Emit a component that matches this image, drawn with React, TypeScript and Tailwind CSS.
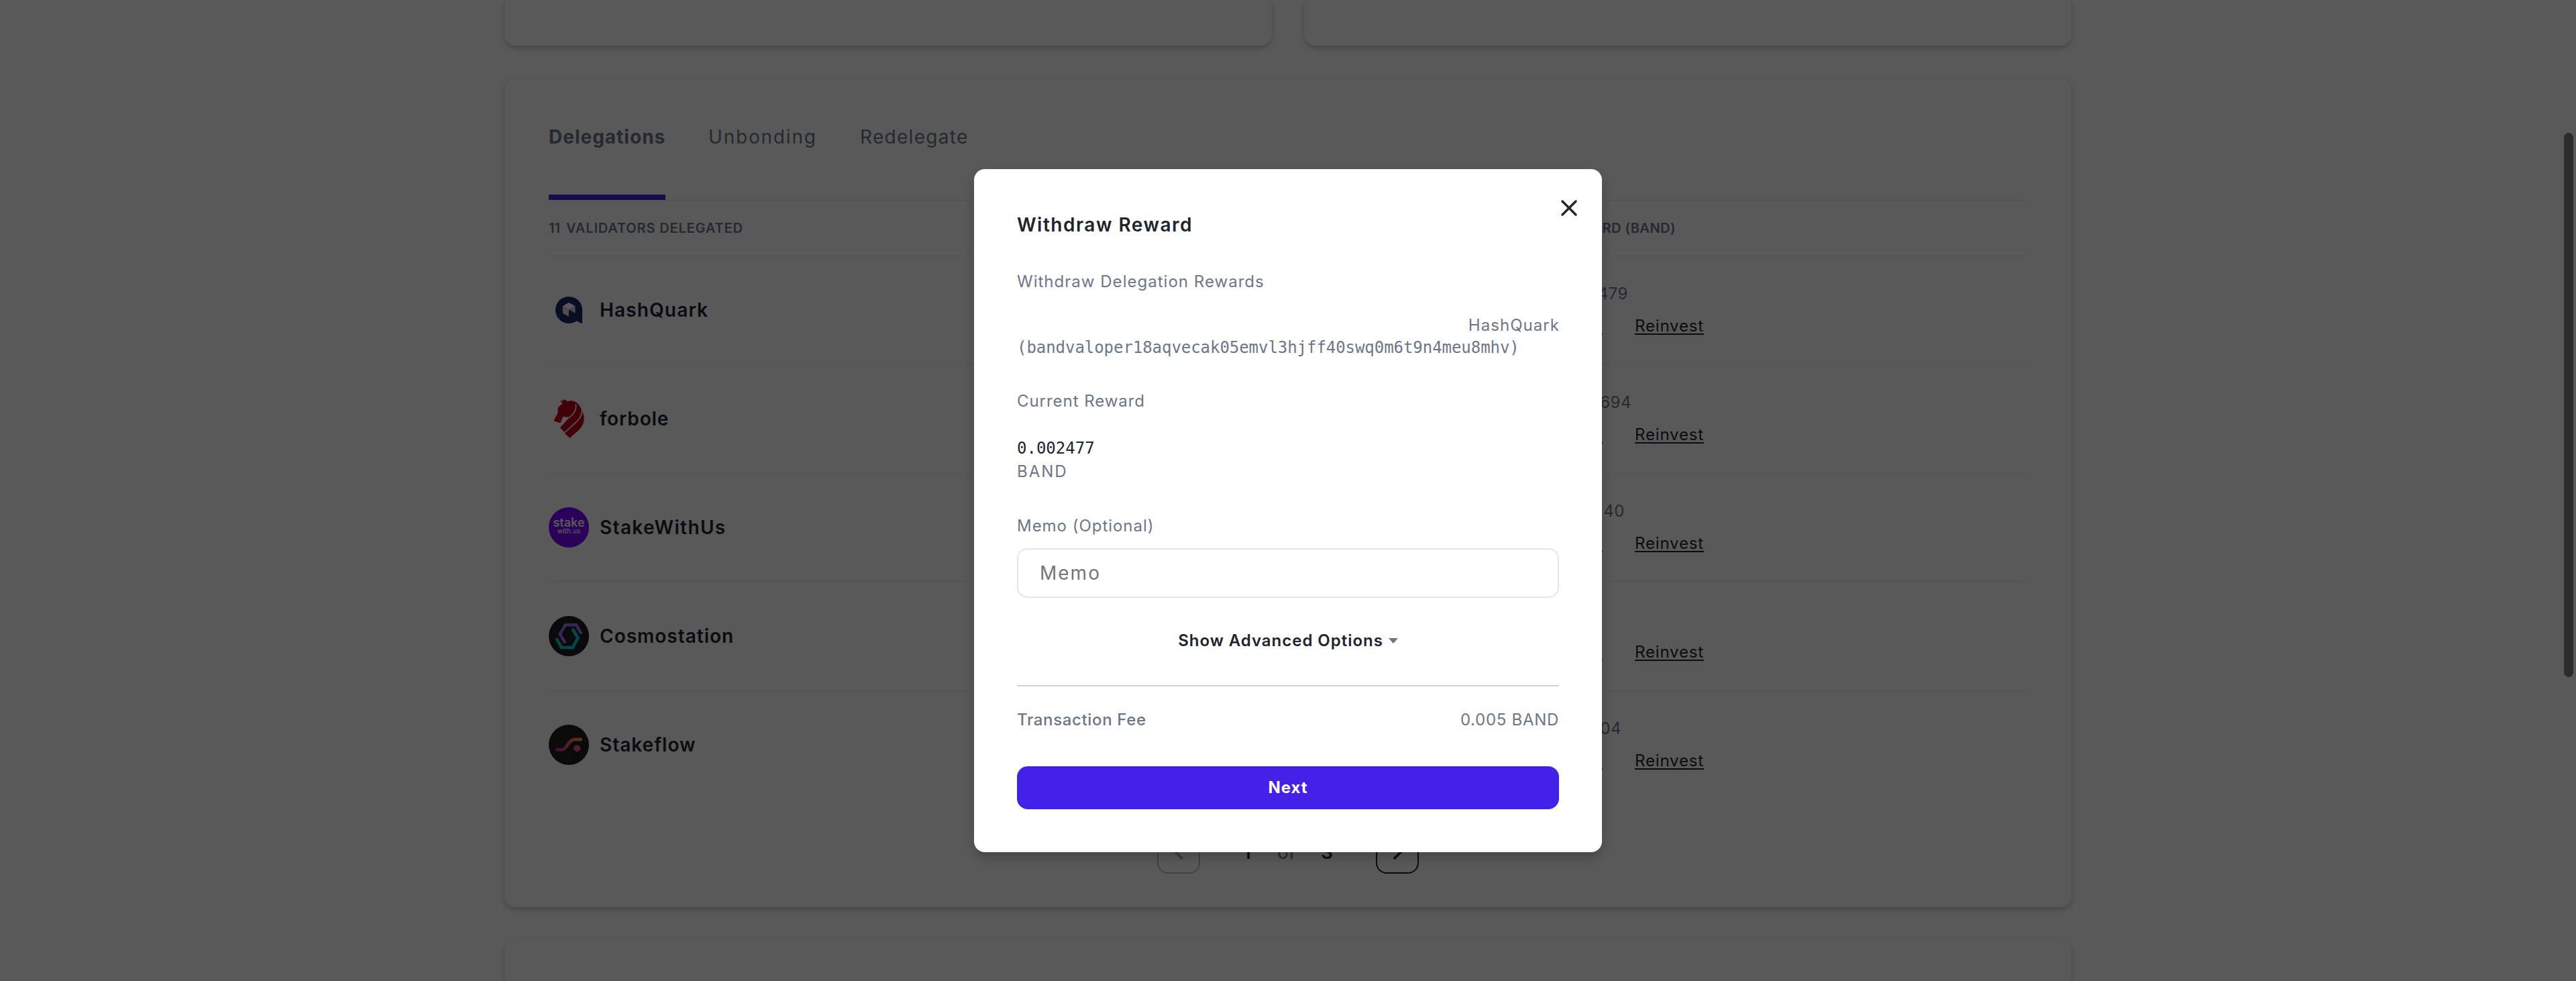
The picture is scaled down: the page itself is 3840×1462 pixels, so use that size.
import React from "react";

const HashQuarkLogo = () => (
  <svg viewBox="0 0 60 60" className="size-[60px]">
    <path d="M30 10a20 20 0 1 0 10.5 37c.6-.4 1.200-.6 1.900-.2l5.600 3c1 .5 2 .1 2-1V30a20 20 0 0 0-20-20z" fill="#1b2a66" />
    <path d="M29.900 19l9.600 5.300-9.600 5-9.200-5z" fill="#ffffff" />
    <path d="M20.700 24.300l9.200 5V40l-9.200-5.300z" fill="#dedede" />
    <path d="M29.900 29.300l9.600-5v10.400z" fill="#cccccc" />
  </svg>
);

const ForboleLogo = () => (
  <svg viewBox="0 0 60 60" className="size-[60px]">
    <path
      d="M17 3l4.500.3.500-2 1.800.7 2.200.3 1.800 2C32 2.500 38 3 42 6.500c4 3.500 6.500 7.500 7 10.500 2.800 5 4 9.500 3.600 14.500-.6 7-4.600 12.500-9.600 17.200L31.300 58.700l-6.600-6-2-3.400-5.700-6L29.500 29.500 28.500 27.500l-7.500-.5-2.500 7.500c-.4 1.400-1 1.800-2.200 1.600L8 33.700C8.400 29 12 26 13.500 21l.2-7.500L20.500 7z"
      fill="#c4001a"
    />
    <path d="M40.300 8.500C42 18 36 24.500 28.500 29.500M49.500 15.500C51 31 36 38 22.500 52" fill="none" stroke="#ffffff" strokeWidth="1.700" />
  </svg>
);

const StakeWithUsLogo = () => (
  <div className="flex size-[60px] flex-col items-center justify-center rounded-full bg-[#7a00ff] pb-[3px] text-white">
    <span className="text-[18px] leading-[14px] font-semibold">stake</span>
    <span className="text-[10px] leading-[11px] font-medium">with.us</span>
  </div>
);

const CosmostationLogo = () => (
  <svg viewBox="0 0 60 60" className="size-[60px]">
    <circle cx="30" cy="30" r="30" fill="#1f1f1f" />
    <g fill="none" strokeWidth="4.500">
      <path d="M24.700 40.300L16.700 26.900 25 13.300H41l7.700 13.400" stroke="#9c6cff" />
      <path d="M11.300 33L19 47h16.700l8-14.300-8.400-13.400" stroke="#05d2d2" />
    </g>
  </svg>
);

const StakeflowLogo = () => (
  <svg viewBox="0 0 60 60" className="size-[60px]">
    <defs>
      <linearGradient id="flow" gradientUnits="userSpaceOnUse" x1="10" y1="37" x2="50" y2="22">
        <stop offset="0" stopColor="#a52bb5" />
        <stop offset="0.450" stopColor="#e8555a" />
        <stop offset="1" stopColor="#f2a93b" />
      </linearGradient>
      <linearGradient id="dot" x1="0" y1="1" x2="1" y2="0">
        <stop offset="0" stopColor="#c03a9a" />
        <stop offset="1" stopColor="#f08a3b" />
      </linearGradient>
    </defs>
    <circle cx="30" cy="30" r="30" fill="#1f1f1f" />
    <path d="M12.300 37.300H19c9 0 9-15 20-15.200h8.500" fill="none" stroke="url(#flow)" strokeWidth="5" strokeLinecap="round" />
    <circle cx="42" cy="35.500" r="5" fill="url(#dot)" />
  </svg>
);

const validators = [
  { name: "HashQuark", Logo: HashQuarkLogo, tracking: "tracking-[1.150px]", reward: "0.002479", inset: "pr-[113px]" },
  { name: "forbole", Logo: ForboleLogo, tracking: "tracking-[0.850px]", reward: "0.002694", inset: "pr-[108px]" },
  { name: "StakeWithUs", Logo: StakeWithUsLogo, tracking: "tracking-[1.350px]", reward: "0.003140", inset: "pr-[118px]" },
  { name: "Cosmostation", Logo: CosmostationLogo, tracking: "tracking-[1px]", reward: "0.0011", inset: "pr-[160px]" },
  { name: "Stakeflow", Logo: StakeflowLogo, tracking: "tracking-[1px]", reward: "0.00204", inset: "pr-[123px]" },
];

const card = "border-2 border-[#f7f7f7] bg-white shadow-[0_4px_8px_rgba(0,0,0,0.200)]";

const linkStyle = "underline decoration-2 underline-offset-[3px]";

const Page = () => (
  <div className="flex h-full flex-col items-center">
    <div className="flex w-[2336px] shrink-0 gap-12">
      <div className={`h-[68px] flex-1 rounded-b-2xl border-t-0 ${card}`} />
      <div className={`h-[68px] flex-1 rounded-b-2xl border-t-0 ${card}`} />
    </div>

    <div className={`mt-12 flex h-[1236px] w-[2336px] shrink-0 flex-col rounded-2xl px-16 ${card}`}>
      <div className="flex h-[182px] shrink-0 gap-16 border-b-2 border-[#f2f2f2] text-[28px] leading-none text-[#6c7689]">
        <div className="flex w-[174px] items-center border-b-8 border-[#4520e6] font-bold tracking-[1px]">Delegations</div>
        <div className="flex w-[162px] items-center pb-2 tracking-[1.800px]">Unbonding</div>
        <div className="flex items-center pb-2 tracking-[1.300px]">Redelegate</div>
      </div>

      <div className="flex h-[82px] shrink-0 items-center justify-between border-b-2 border-[#f2f2f2] text-[20px] font-semibold text-[#6c7689]">
        <div className="flex gap-[9px]">
          <span>11</span>
          <span className="tracking-[0.850px]">VALIDATORS DELEGATED</span>
        </div>
        <span className="pr-[524px] tracking-[0.500px]">REWARD (BAND)</span>
      </div>

      {validators.map(({ name, Logo, tracking, reward, inset }) => (
        <div key={name} className="flex h-[162px] shrink-0 items-center justify-between border-b-2 border-[#f2f2f2] nth-[7]:border-transparent">
          <div className="flex items-center gap-4">
            <Logo />
            <span className={`text-[28px] font-semibold text-[#20242c] ${tracking}`}>{name}</span>
          </div>
          <div className="flex flex-col items-end pr-[482px] text-[24px] leading-[48px]">
            <span className={`tracking-[0.500px] text-[#6c7689] ${inset}`}>{reward}</span>
            <div className="flex gap-12 text-[#20242c]">
              <span className={linkStyle}>Claim</span>
              <span className={`tracking-[0.840px] ${linkStyle}`}>Reinvest</span>
            </div>
          </div>
        </div>
      ))}

      <div className="mt-[46px] flex items-center justify-center text-[28px] text-[#20242c]">
        <div className="flex size-16 items-center justify-center rounded-2xl border-2 border-[#b9bbc8]">
          <svg viewBox="0 0 24 24" className="size-6">
            <path d="M17.500 2L7.500 12l10 10" fill="none" stroke="#a8a8a8" strokeWidth="3.600" />
          </svg>
        </div>
        <div className="flex w-[262px] pl-[60px] text-center">
          <span className="w-5 font-semibold">1</span>
          <span className="ml-[35px] w-6 text-[#6c7689]">of</span>
          <span className="ml-10 w-5 font-semibold">3</span>
        </div>
        <div className="flex size-16 items-center justify-center rounded-2xl border-2 border-[#20242c]">
          <svg viewBox="0 0 24 24" className="size-6">
            <path d="M7 2l10 10L7 22" fill="none" stroke="#20242c" strokeWidth="3.600" />
          </svg>
        </div>
      </div>
    </div>

    <div className={`mt-12 h-[200px] w-[2336px] shrink-0 rounded-2xl ${card}`} />
  </div>
);

const Modal = () => (
  <div className="relative flex h-[1018px] w-[936px] flex-col rounded-2xl bg-white px-16 pt-16 text-[24px] leading-8 text-[#6c7689] shadow-[0_8px_16px_rgba(0,0,0,0.200)]">
    <svg viewBox="0 0 24 24" className="absolute top-[46px] right-[37px] size-6">
      <path d="M2 2l20 20M22 2L2 22" fill="none" stroke="#20242c" strokeWidth="3.400" strokeLinecap="round" />
    </svg>

    <h2 className="text-[28px] leading-[38px] font-semibold tracking-[1.500px] text-[#20242c]">Withdraw Reward</h2>

    <div className="mt-[50px] tracking-[1.020px]">Withdraw Delegation Rewards</div>
    <div className="mt-[33px] -mr-px text-right tracking-[1.050px]">HashQuark</div>
    <div className="font-['DejaVu_Sans_Mono',monospace] leading-[34px] tracking-[-0.050px] whitespace-nowrap">
      (bandvaloper18aqvecak05emvl3hjff40swq0m6t9n4meu8mhv)
    </div>

    <div className="mt-[47px] tracking-[0.950px]">Current Reward</div>
    <div className="mt-[39px] font-['DejaVu_Sans_Mono',monospace] leading-[30px] text-[#20242c]">0.002477</div>
    <div className="mt-1 leading-[31px] tracking-[2px]">BAND</div>

    <div className="mt-[50px] tracking-[0.970px]">Memo (Optional)</div>
    <input
      className="mt-[17px] h-[74px] w-full shrink-0 rounded-2xl border-2 border-[#e4e5ea] bg-white px-8 text-[28px] tracking-[2px] outline-none placeholder:text-[#757575]"
      placeholder="Memo"
    />

    <div className="mt-12 flex items-center justify-center gap-2">
      <span className="font-semibold tracking-[0.970px] text-[#20242c]">Show Advanced Options</span>
      <svg viewBox="0 0 14 8" className="h-2 w-3.5">
        <path d="M0 0h14L7 8z" fill="#6c7689" />
      </svg>
    </div>

    <div className="mt-[50px] h-0.5 shrink-0 bg-[#ced2d9]" />

    <div className="mt-[34px] flex justify-between">
      <span className="font-medium tracking-[0.650px]">Transaction Fee</span>
      <span className="tracking-[0.700px]">0.005 BAND</span>
    </div>

    <button className="mt-[53px] h-16 w-full shrink-0 rounded-2xl bg-[#4520e6] font-bold tracking-[0.900px] text-white">Next</button>
  </div>
);

export default function App() {
  return (
    <div className="relative h-[1462px] w-full overflow-hidden bg-white font-['Inter',sans-serif]">
      <Page />
      <div className="absolute inset-0 flex items-start justify-center bg-black/65 pt-[252px]">
        <Modal />
      </div>
      <div className="absolute top-[198px] right-1 h-[811px] w-3.5 rounded-full bg-[#2c2c2c]" />
    </div>
  );
}
